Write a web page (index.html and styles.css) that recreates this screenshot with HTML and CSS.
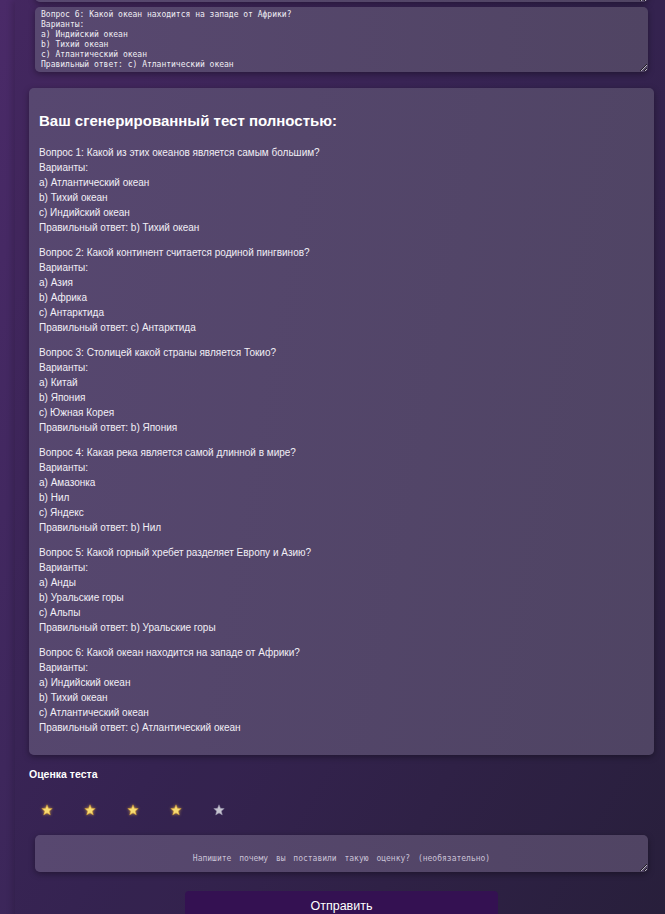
FILE: index.html
```html
<!DOCTYPE html>
<html lang="ru">
<head>
<meta charset="utf-8">
<title>Тест</title>
<link rel="stylesheet" href="styles.css">
</head>
<body>
<div class="page">
  <textarea class="field field-prev" readonly>...</textarea>
  <textarea class="field field-last" readonly>Вопрос 6: Какой океан находится на западе от Африки?
Варианты:
a) Индийский океан
b) Тихий океан
c) Атлантический океан
Правильный ответ: c) Атлантический океан</textarea>

  <section class="card">
    <h2 class="card-title">Ваш сгенерированный тест полностью:</h2>
    <p class="q">Вопрос 1: Какой из этих океанов является самым большим?<br>Варианты:<br>a) Атлантический океан<br>b) Тихий океан<br>c) Индийский океан<br>Правильный ответ: b) Тихий океан</p>
    <p class="q">Вопрос 2: Какой континент считается родиной пингвинов?<br>Варианты:<br>a) Азия<br>b) Африка<br>c) Антарктида<br>Правильный ответ: c) Антарктида</p>
    <p class="q">Вопрос 3: Столицей какой страны является Токио?<br>Варианты:<br>a) Китай<br>b) Япония<br>c) Южная Корея<br>Правильный ответ: b) Япония</p>
    <p class="q">Вопрос 4: Какая река является самой длинной в мире?<br>Варианты:<br>a) Амазонка<br>b) Нил<br>c) Яндекс<br>Правильный ответ: b) Нил</p>
    <p class="q">Вопрос 5: Какой горный хребет разделяет Европу и Азию?<br>Варианты:<br>a) Анды<br>b) Уральские горы<br>c) Альпы<br>Правильный ответ: b) Уральские горы</p>
    <p class="q">Вопрос 6: Какой океан находится на западе от Африки?<br>Варианты:<br>a) Индийский океан<br>b) Тихий океан<br>c) Атлантический океан<br>Правильный ответ: c) Атлантический океан</p>
  </section>

  <h3 class="rating-title">Оценка теста</h3>
  <div class="stars">
    <svg class="star on" viewBox="0 0 24 24"><polygon points="12,1.5 15,8.6 22.5,9.2 16.8,14.2 18.6,21.8 12,17.8 5.4,21.8 7.2,14.2 1.5,9.2 9,8.6"/></svg>
    <svg class="star on" viewBox="0 0 24 24"><polygon points="12,1.5 15,8.6 22.5,9.2 16.8,14.2 18.6,21.8 12,17.8 5.4,21.8 7.2,14.2 1.5,9.2 9,8.6"/></svg>
    <svg class="star on" viewBox="0 0 24 24"><polygon points="12,1.5 15,8.6 22.5,9.2 16.8,14.2 18.6,21.8 12,17.8 5.4,21.8 7.2,14.2 1.5,9.2 9,8.6"/></svg>
    <svg class="star on" viewBox="0 0 24 24"><polygon points="12,1.5 15,8.6 22.5,9.2 16.8,14.2 18.6,21.8 12,17.8 5.4,21.8 7.2,14.2 1.5,9.2 9,8.6"/></svg>
    <svg class="star off" viewBox="0 0 24 24"><polygon points="12,1.5 15,8.6 22.5,9.2 16.8,14.2 18.6,21.8 12,17.8 5.4,21.8 7.2,14.2 1.5,9.2 9,8.6"/></svg>
  </div>

  <textarea class="field field-comment" placeholder="Напишите почему вы поставили такую оценку? (необязательно)"></textarea>

  <div class="actions">
    <button class="submit" type="button">Отправить</button>
  </div>
</div>
</body>
</html>
```

FILE: styles.css
```css
html, body {
  margin: 0;
  padding: 0;
  overflow: hidden;
}
body {
  width: 665px;
  height: 914px;
  background: linear-gradient(120deg, #4a2a68 0%, #3a2658 50%, #2c2240 100%);
  font-family: "Liberation Sans", Arial, sans-serif;
  color: #f2f0f6;
}
.page {
  margin-left: 15px;
  width: 653px;
  min-height: 914px;
  box-sizing: border-box;
  padding: 0 20px 0 14px;
  display: flex;
  flex-direction: column;
  align-items: stretch;
  background: rgba(0, 0, 0, 0.07);
  box-shadow: -3px 0 6px rgba(0, 0, 0, 0.15);
}
.field {
  display: block;
  box-sizing: border-box;
  width: 613px;
  align-self: flex-start;
  margin-left: 6px;
  border: none;
  border-radius: 5px;
  background: linear-gradient(90deg, #584870, #504463);
  color: #f0eef4;
  font-family: "DejaVu Sans Mono", "Liberation Mono", monospace;
  font-size: 8px;
  line-height: 10px;
  box-shadow: 0 2px 6px rgba(0, 0, 0, 0.35);
  outline: none;
  color-scheme: dark;
}
.field-prev {
  height: 30px;
  margin-top: -28px;
  color: transparent;
}
.field-last {
  height: 65px;
  margin-top: 5px;
  padding: 3px 6px 0;
  overflow: hidden;
}
.card {
  margin-top: 16px;
  width: 625px;
  box-sizing: border-box;
  padding: 10px;
  border-radius: 5px;
  background: linear-gradient(100deg, #574770, #4f4463);
  box-shadow: 0 2px 6px rgba(0, 0, 0, 0.35);
}
.card-title {
  margin: 14px 0 15px;
  font-size: 15px;
  line-height: 18px;
  font-weight: bold;
  color: #ffffff;
}
.q {
  margin: 0 0 10px;
  font-size: 10px;
  line-height: 15px;
  color: #f2eff6;
}
.rating-title {
  margin: 13px 0 0;
  font-size: 10.5px;
  line-height: 13px;
  font-weight: bold;
  color: #ffffff;
}
.stars {
  display: flex;
  gap: 31px;
  padding-left: 12px;
  margin-top: 23px;
  height: 12px;
}
.star {
  width: 12px;
  height: 12px;
}
.star.on polygon {
  fill: #f8db72;
  stroke: #c9902a;
  stroke-width: 1;
}
.star.on {
  filter: drop-shadow(0 0 1.5px rgba(255, 200, 80, 0.6));
}
.star.off polygon {
  fill: #c6c4d0;
  stroke: #8e8aa4;
  stroke-width: 1;
}
.field-comment {
  margin-top: 19px;
  height: 37px;
  padding: 19px 6px 0;
  resize: both;
  text-align: center;
  word-spacing: 3px;
}
.field-comment::placeholder {
  color: #c9c2d6;
}
.actions {
  display: flex;
  justify-content: center;
  margin-top: 19px;
  width: 625px;
}
.submit {
  width: 313px;
  height: 30px;
  border: none;
  border-radius: 4px;
  background: #341152;
  color: #ffffff;
  font-family: "Liberation Sans", Arial, sans-serif;
  font-size: 12.5px;
}
```
